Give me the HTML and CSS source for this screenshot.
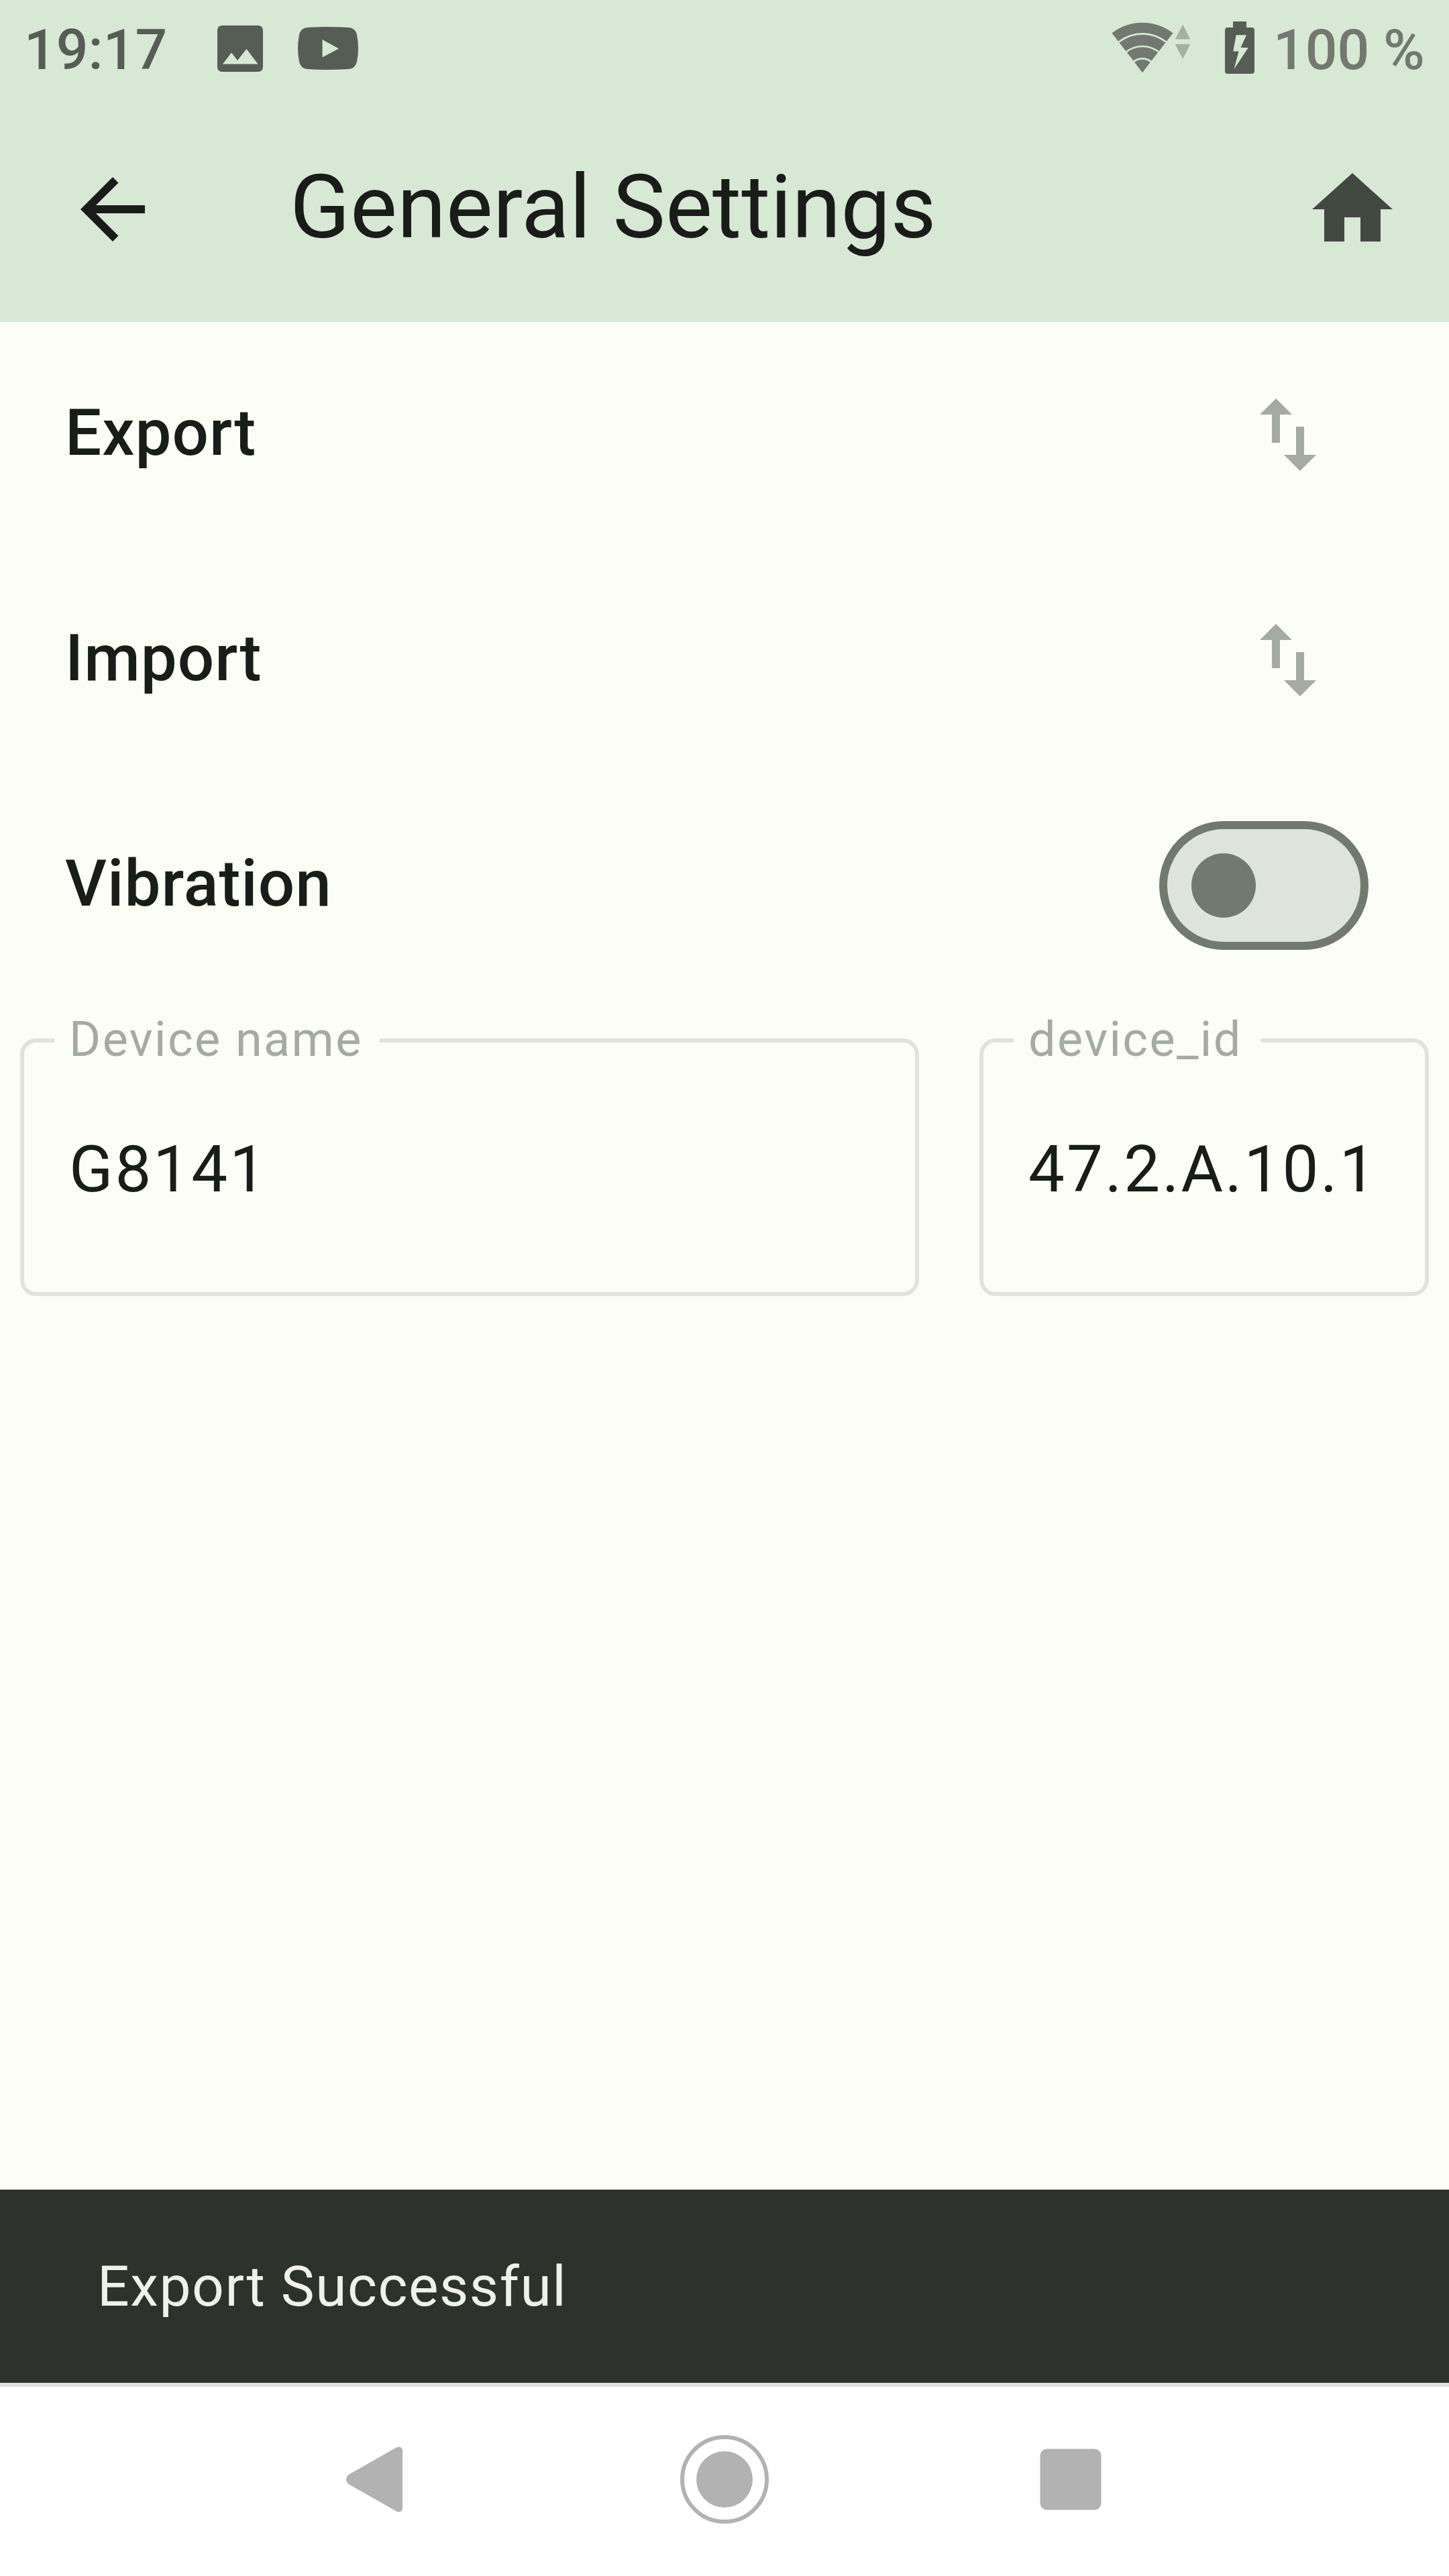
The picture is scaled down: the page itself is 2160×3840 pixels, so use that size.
FILE: index.html
```html
<!DOCTYPE html>
<html lang="en">
<head>
<meta charset="utf-8">
<title>General Settings</title>
<link rel="stylesheet" href="styles.css">
</head>
<body>
<div class="screen">
  <header class="top">
    <div class="status">
      <span class="clock">19:17</span>
      <svg class="notif-image" viewBox="0 0 68 69"><path fill-rule="evenodd" d="M7.500 0H60.500Q68 0 68 7.500V61.500Q68 69 60.500 69H7.500Q0 69 0 61.500V7.500Q0 0 7.500 0ZM21 40.500L8 57.500H60.500L43.500 35L30 52Z"/></svg>
      <svg class="notif-video" viewBox="0 0 90 64"><path fill-rule="evenodd" d="M14 1Q45-1 76 1Q86 2 88 12Q92 32 88 52Q86 62 76 63Q45 65 14 63Q4 62 2 52Q-2 32 2 12Q4 2 14 1ZM36.500 19V45.500L61 32.500Z"/></svg>
      <svg class="wifi" viewBox="0 0 120 78">
        <g class="wifi-bands">
          <path d="M.5 17.300A74.300 74.300 0 0 1 91.500 17.300L82.100 29.400A59 59 0 0 0 9.900 29.400Z"/>
          <path d="M11.500 31.500A56.300 56.300 0 0 1 80.500 31.500L70.700 44.200A40.300 40.300 0 0 0 21.300 44.200Z"/>
          <path d="M22.900 46.200A37.700 37.700 0 0 1 69.100 46.200L59.500 58.600A22 22 0 0 0 32.500 58.600Z"/>
          <path d="M34.200 60.800A19.300 19.300 0 0 1 57.800 60.800L46 76.300Z"/>
        </g>
        <path class="wifi-traffic" d="M106.200 4.500L117.300 26.500H94.700ZM94.700 33.700H117.300L106.200 56Z"/>
      </svg>
      <svg class="battery" viewBox="0 0 44 78"><path fill-rule="evenodd" d="M12 0H32V9H40Q44 9 44 13V74Q44 78 40 78H4Q0 78 0 74V13Q0 9 4 9H12ZM16.700 20.300H32.100L23.500 38.700L34.700 39.300L13.500 71L20.600 44.600H12.300Z"/></svg>
      <span class="percent">100 %</span>
    </div>
    <div class="appbar">
      <svg class="icon back" viewBox="0 0 24 24"><path d="M20 11H7.830l5.590-5.590L12 4l-8 8 8 8 1.410-1.410L7.830 13H20v-2z"/></svg>
      <h1 class="title">General Settings</h1>
      <svg class="icon home" viewBox="0 0 24 24"><path d="M10 20v-6h4v6h5v-8h3L12 3 2 12h3v8z"/></svg>
    </div>
  </header>
  <main class="content">
    <div class="row"><span class="row-label">Export</span><svg class="icon swap" viewBox="0 0 24 24"><path d="M9 3L5 6.990h3V14h2V6.990h3L9 3zm7 14.010V10h-2v7.010h-3L15 21l4-3.990h-3z"/></svg></div>
    <div class="row"><span class="row-label">Import</span><svg class="icon swap" viewBox="0 0 24 24"><path d="M9 3L5 6.990h3V14h2V6.990h3L9 3zm7 14.010V10h-2v7.010h-3L15 21l4-3.990h-3z"/></svg></div>
    <div class="row"><span class="row-label">Vibration</span><span class="switch"><span class="thumb"></span></span></div>
    <div class="fields">
      <fieldset class="field field-name"><legend>Device name</legend><span class="value">G8141</span></fieldset>
      <fieldset class="field field-id"><legend>device_id</legend><span class="value">47.2.A.10.1</span></fieldset>
    </div>
  </main>
  <div class="snackbar">Export Successful</div>
  <nav class="navbar">
    <svg class="nav-icon" viewBox="0 0 144 144"><path d="M98 25Q101 23 104 23.600Q108 25 108 30V114Q108 119 104 120.400Q101 121 98 119L27.500 79Q20.500 72 27.500 65Z" class="nav-back"/></svg>
    <svg class="nav-icon" viewBox="0 0 144 144"><circle cx="72" cy="72" r="63" class="nav-ring"/><circle cx="72" cy="72" r="42"/></svg>
    <svg class="nav-icon" viewBox="0 0 144 144"><rect x="26.500" y="26.500" width="91" height="91" rx="10"/></svg>
  </nav>
</div>
</body>
</html>
```
FILE: styles.css
```css
* { box-sizing: border-box; }
body {
  margin: 0;
  font-family: Roboto, "Liberation Sans", sans-serif;
  color: #1a1c19;
}
svg { display: block; flex: none; }
.screen {
  width: 2160px;
  height: 3840px;
  display: flex;
  flex-direction: column;
  background: #fcfdf7;
  overflow: hidden;
}
.top { background: #d7e8d5; height: 480px; }
.status {
  height: 144px;
  display: flex;
  align-items: flex-start;
  padding: 0 36px;
  fill: #565d55;
  font-size: 84px;
  font-weight: 500;
  line-height: 98px;
  white-space: pre;
}
.clock { width: 288px; color: #565d55; padding-top: 26px; }
.notif-image { width: 68px; height: 69px; margin-top: 38px; }
.notif-video { width: 90px; height: 64px; margin: 40px 0 0 52px; }
.wifi { width: 120px; height: 78px; margin: 32px 0 0 auto; }
.wifi-bands { fill: #72796f; }
.wifi-traffic { fill: #a5b0a5; }
.battery { width: 44px; height: 78px; margin: 32px 0 0 49px; }
.percent { width: 226px; margin-left: 28px; padding-top: 26px; color: #72796f; }
.appbar {
  height: 336px;
  display: flex;
  align-items: center;
  padding: 0 72px 0 96px;
}
.icon { width: 144px; height: 144px; }
.back { fill: #1a1c19; }
.home { fill: #424940; }
.title {
  flex: 1;
  margin: -6px 0 0 192px;
  font-size: 132px;
  font-weight: 400;
  line-height: 168px;
}
.content { flex: 1; }
.row {
  height: 336px;
  display: flex;
  align-items: center;
  justify-content: space-between;
  padding: 0 120px 0 97px;
}
.row-label {
  font-size: 96px;
  font-weight: 500;
  line-height: 144px;
  letter-spacing: 1px;
  margin-top: -6px;
}
.swap { fill: #a6aaa2; margin-right: 48px; }
.switch {
  width: 312px;
  height: 192px;
  border: 12px solid #72796f;
  border-radius: 96px;
  background: #dee4da;
  display: flex;
  align-items: center;
  padding-left: 36px;
}
.thumb { width: 96px; height: 96px; border-radius: 50%; background: #72796f; }
.fields { display: flex; gap: 90px; padding: 0 30px; margin-top: 21px; }
.field {
  min-width: 0;
  margin: 0;
  height: 423px;
  padding: 0 0 0 67px;
  border: 6px solid #e0e2db;
  border-radius: 24px;
}
.field-name { width: 1340px; }
.field-id { width: 670px; }
legend {
  margin-left: -22px;
  padding: 0 0 0 22px;
  height: 84px;
  font-size: 72px;
  line-height: 81px;
  letter-spacing: 2.4px;
  color: #a6aaa2;
}
.field-name legend { width: 485px; }
.field-id legend { width: 368px; }
.value {
  display: block;
  margin-top: 78px;
  font-size: 96px;
  line-height: 144px;
  letter-spacing: 3px;
}
.snackbar {
  height: 288px;
  padding: 85px 145px;
  background: #2f312d;
  color: #f0f1eb;
  font-size: 84px;
  line-height: 120px;
  letter-spacing: 1.5px;
}
.navbar {
  height: 288px;
  border-top: 6px solid #e0e0e0;
  background: #fff;
  display: flex;
  justify-content: center;
  align-items: center;
  gap: 372px;
  padding-bottom: 6px;
  fill: #b2b2b2;
}
.nav-icon { width: 144px; height: 144px; }
.nav-ring { fill: none; stroke: #b2b2b2; stroke-width: 6; }
```
